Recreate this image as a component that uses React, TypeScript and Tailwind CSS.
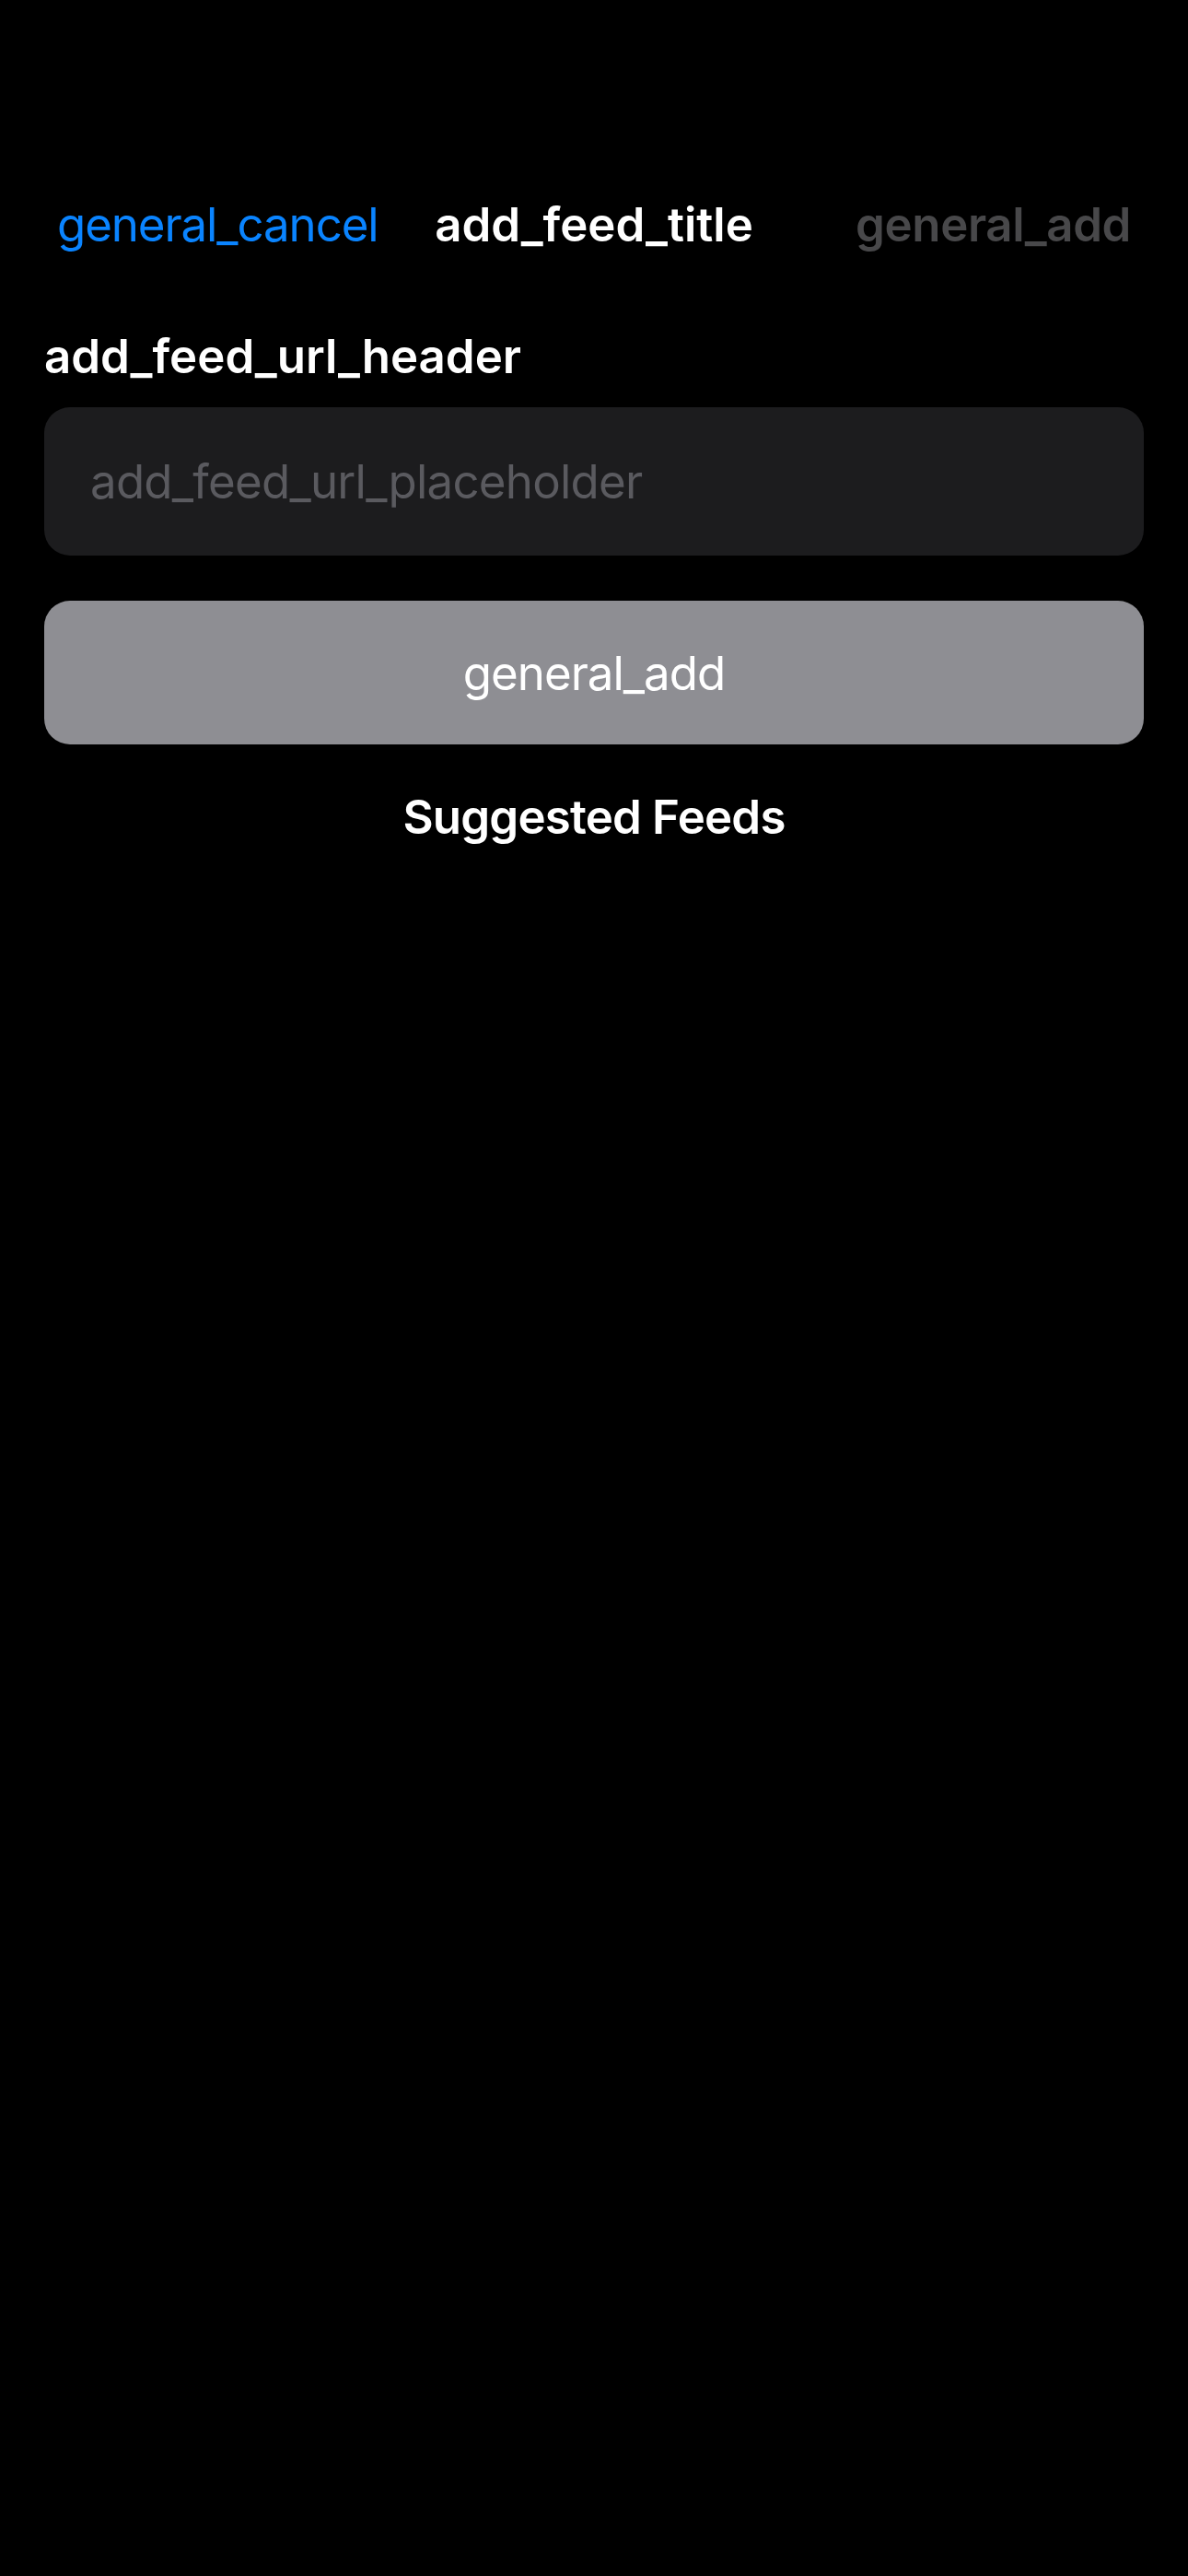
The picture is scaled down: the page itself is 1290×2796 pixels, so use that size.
import React from "react";

export default function App() {
  return (
    <div className="min-h-[2796px] w-full bg-black font-['Inter','Noto_Sans',sans-serif] text-white antialiased">
      {/* status bar area */}
      <div className="h-[182px]" />
      {/* navigation bar */}
      <div className="grid h-[122px] grid-cols-[1fr_auto_1fr] items-center px-[62px]">
        <button className="justify-self-start text-[51px] leading-[61px] tracking-[-1.1px] text-[#0a84ff]">
          general_cancel
        </button>
        <div className="text-[51px] font-semibold leading-[61px] text-white">add_feed_title</div>
        <button className="justify-self-end text-[51px] font-semibold leading-[61px] tracking-[-0.4px] text-[#48484a]">
          general_add
        </button>
      </div>

      <div className="flex flex-col px-[48px]">
        <div className="mt-[52px] text-[51px] font-semibold leading-[61px] text-white">
          add_feed_url_header
        </div>
        <div className="mt-[25px] flex h-[161px] items-center rounded-[28px] bg-[#1c1c1e] px-[50px]">
          <span className="text-[51px] leading-[61px] tracking-[-0.75px] text-[#5a5a5f]">
            add_feed_url_placeholder
          </span>
        </div>
        <button className="mt-[49px] flex h-[156px] items-center justify-center rounded-[28px] bg-[#8e8e93]">
          <span className="text-[51px] leading-[61px] tracking-[-1px] text-white">general_add</span>
        </button>
        <div className="mt-[48px] text-center text-[51px] font-semibold leading-[61px] tracking-[-0.8px] text-white">
          Suggested Feeds
        </div>
      </div>
    </div>
  );
}
